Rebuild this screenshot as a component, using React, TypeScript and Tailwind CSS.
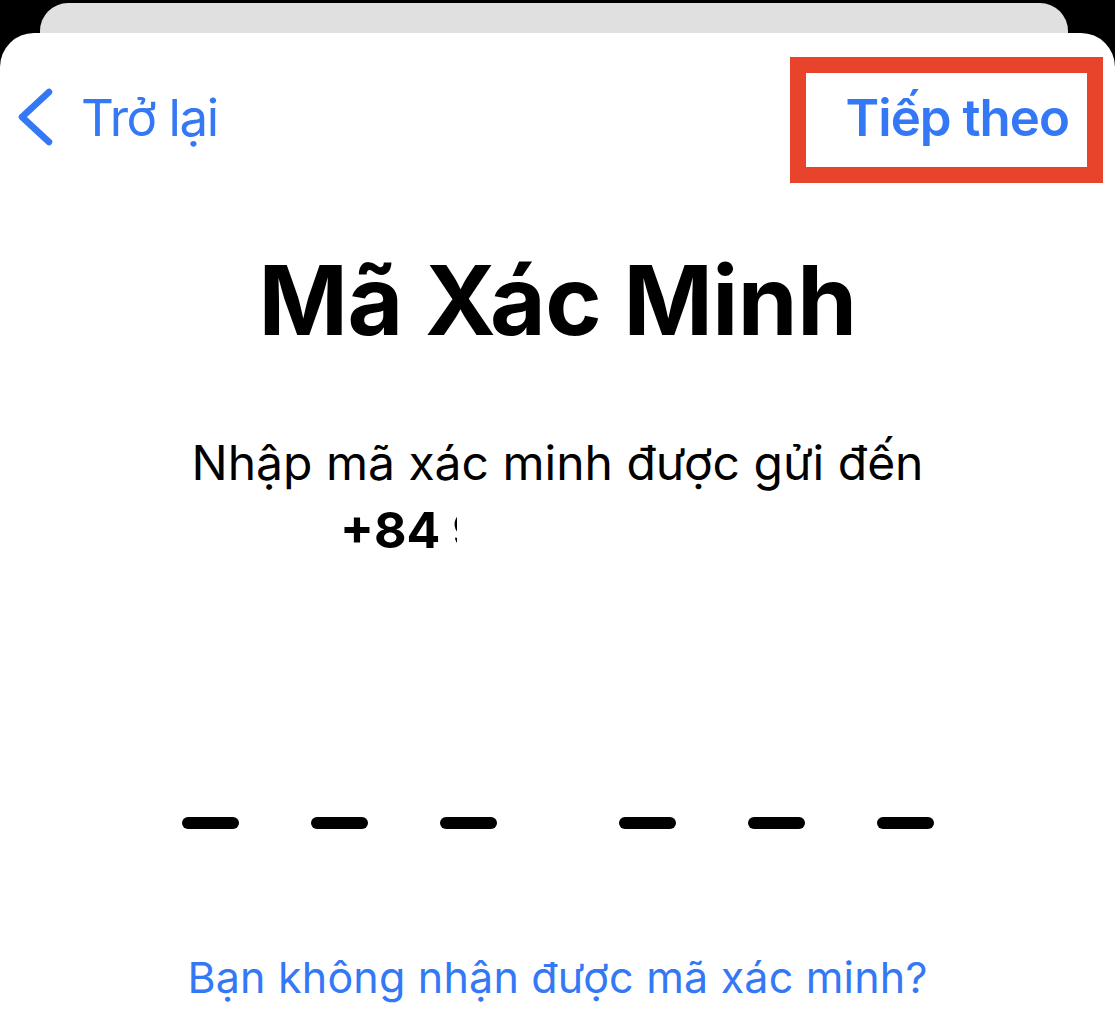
import React from 'react';

const BackChevron = () => (
  <svg width="40" height="62" viewBox="0 0 40 62" fill="none" className="shrink-0">
    <polyline
      points="33,6 6,31 33,56"
      stroke="#3478F6"
      strokeWidth="6.5"
      strokeLinecap="round"
      strokeLinejoin="round"
    />
  </svg>
);

const CodeDash = () => <div className="w-[57px] h-[12px] rounded-full bg-black" />;

const App = () => {
  return (
    <div className="w-[1115px] h-[1024px] overflow-hidden bg-black pt-[3px] font-['Inter',sans-serif]">
      {/* stacked sheet behind */}
      <div className="ml-[40px] mr-[47px] h-[30px] rounded-t-[28px] bg-[#e0e0e0]" />

      <div className="h-[1000px] rounded-t-[34px] bg-white pt-[24px]">
        {/* Nav bar */}
        <div className="flex items-start justify-between pr-[12px]">
          <div className="flex items-start">
            <div className="ml-[16px] mt-[29px]">
              <BackChevron />
            </div>
            <span className="ml-[25px] mt-[35px] text-[51px] leading-none tracking-[-1.4px] text-[#3478F6]">Trở lại</span>
          </div>
          <div className="w-[313px] border-[16px] border-[#E8432B] pr-[18px] pt-[19px] pb-[24px] text-right">
            <span className="block text-[51px] leading-none font-semibold tracking-[-1px] text-[#3478F6]">Tiếp theo</span>
          </div>
        </div>

        {/* Title */}
        <h1 className="mt-[69px] text-center text-[96px] leading-none font-bold tracking-[-0.5px] text-black">Mã Xác Minh</h1>

        {/* Subtitle */}
        <p className="mt-[91px] text-center text-[48px] leading-none text-black">Nhập mã xác minh được gửi đến</p>
        <div className="mt-[18px] pl-[340px]">
          <span className="inline-block w-[117px] overflow-hidden whitespace-nowrap align-top text-[50px] leading-none font-bold text-black">
            +84 9
          </span>
        </div>

        {/* Code slots */}
        <div className="mt-[262px] flex justify-center gap-[122px]">
          <div className="flex gap-[72px]">
            <CodeDash />
            <CodeDash />
            <CodeDash />
          </div>
          <div className="flex gap-[72px]">
            <CodeDash />
            <CodeDash />
            <CodeDash />
          </div>
        </div>

        {/* Resend link */}
        <p className="mt-[127px] text-center text-[43px] leading-none tracking-[0.2px] text-[#3478F6]">Bạn không nhận được mã xác minh?</p>
      </div>
    </div>
  );
};

export default App;
